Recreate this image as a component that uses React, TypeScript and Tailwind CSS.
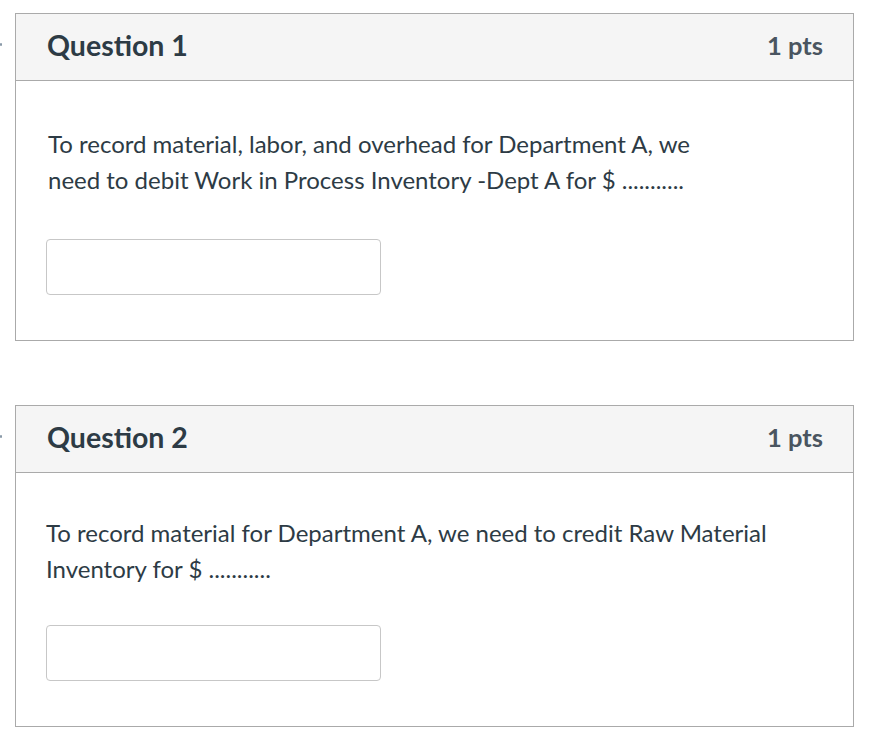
import React from 'react';

type Q = { title: string; pts: string; text: string; textClass: string; bodyPad: string; gap: string };

const questions: Q[] = [
  {
    title: 'Question 1',
    pts: '1 pts',
    text: 'To record material, labor, and overhead for Department A, we need to debit Work in Process Inventory -Dept A for $ ...........',
    textClass: 'max-w-[670px] pl-[2px]',
    bodyPad: 'pt-[45px]',
    gap: 'mt-[41px]',
  },
  {
    title: 'Question 2',
    pts: '1 pts',
    text: 'To record material for Department A, we need to credit Raw Material Inventory for $ ...........',
    textClass: '',
    bodyPad: 'pt-[42px]',
    gap: 'mt-[38px]',
  },
];

const QuestionCard: React.FC<{ q: Q }> = ({ q }) => (
  <div className="relative">
    <div className="absolute left-[-15px] top-[30px] h-[3px] w-[2px] rounded-full bg-[#8a9aa8]" />
    <div className="border border-[#aaaaaa] bg-white">
      <div className="flex h-[67px] items-center justify-between border-b border-[#aaaaaa] bg-[#f5f5f5] pb-[3px] pl-[31px] pr-[30px]">
        <h2 className="text-[28.5px] font-bold text-[#2d3b45]">{q.title}</h2>
        <span className="text-[25.5px] font-bold text-[#4a5560]">{q.pts}</span>
      </div>
      <div className={`px-[30px] pb-[45px] ${q.bodyPad}`}>
        <p className={`text-[24px] leading-[36px] text-[#2d3b45] ${q.textClass}`}>{q.text}</p>
        <input
          type="text"
          className={`block h-[56px] w-[335px] rounded-[4px] border border-[#c7c7c7] bg-white outline-none ${q.gap}`}
        />
      </div>
    </div>
  </div>
);

export default function App() {
  return (
    <div
      className="min-h-[745px] w-[877px] bg-white pl-[15px] pr-[23px] pt-[13px]"
      style={{ fontFamily: 'Lato, "Noto Sans", sans-serif' }}
    >
      <div className="flex flex-col gap-[64px]">
        {questions.map((q) => (
          <QuestionCard key={q.title} q={q} />
        ))}
      </div>
    </div>
  );
}
